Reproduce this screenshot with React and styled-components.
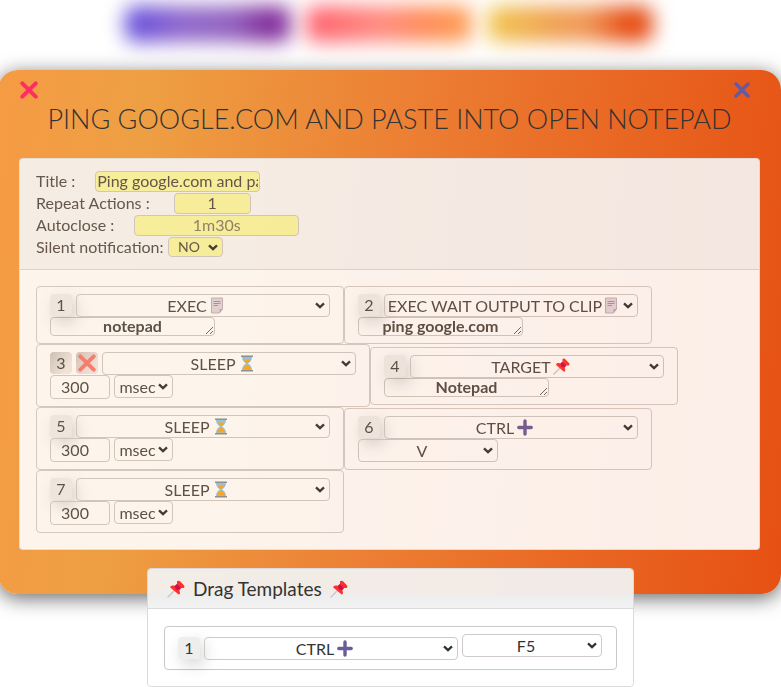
import React from "react";
import styled, { createGlobalStyle, css } from "styled-components";

const chevron = `url("data:image/svg+xml,%3Csvg xmlns='http://www.w3.org/2000/svg' width='10' height='7' viewBox='0 0 10 7'%3E%3Cpath d='M1 1.4L5 5.2L9 1.4' fill='none' stroke='%23333' stroke-width='2.3'/%3E%3C/svg%3E")`;

const GlobalStyle = createGlobalStyle`
  *, *::before, *::after { box-sizing: border-box; }
  body {
    margin: 0;
    overflow-x: hidden;
    background: #fff;
    color: #333;
    font: 16px/22px Lato, "Open Sans", sans-serif;
  }
  button, input, select, textarea { font: inherit; color: inherit; margin: 0; }
`;

const TopBar = styled.nav`
  display: flex;
  justify-content: center;
  gap: 15px;
  height: 70px;
  padding: 6px 4px 28px 0;
`;

const GradientButton = styled.button`
  width: 166px;
  border: 0;
  border-radius: 10px;
  background: linear-gradient(90deg, ${(p) => p.$colors});
  filter: blur(10px);
`;

const Editor = styled.main`
  margin: 0 0 0 -2px;
  padding: 10px 21px 44px;
  border-radius: 20px;
  background: linear-gradient(96deg, #f59b45 0%, #ee9f43 18%, #ec8034 49%, #e96824 74%, #e65113 100%);
  box-shadow: 0 4px 20px rgba(0, 0, 0, 0.6);
`;

const EditorActions = styled.div`
  display: flex;
  justify-content: space-between;
  padding: 0 8px 0 0;
`;

const IconButton = styled.button`
  display: grid;
  place-items: center;
  width: 20px;
  height: 20px;
  padding: 0;
  border: 0;
  background: none;
  color: ${(p) => p.$color};
`;

const EditorTitle = styled.h1`
  margin: 0 0 20px;
  font-size: 27px;
  font-weight: 300;
  line-height: 38px;
  text-align: center;
  text-transform: uppercase;
  white-space: nowrap;
`;

const Panel = styled.section`
  border: 1px solid rgba(0, 0, 0, 0.1);
  border-radius: 4px;
  background: #fff;
  opacity: ${(p) => p.$opacity || 1};
`;

const SettingsForm = styled.form`
  padding: 11px 16px;
  border-bottom: 1px solid rgba(0, 0, 0, 0.11);
  background: rgba(0, 0, 0, 0.035);
  color: #57504b;
`;

const Field = styled.div`
  display: flex;
  align-items: center;
  height: 22px;
  gap: ${(p) => p.$gap};
`;

const control = css`
  border: 1px solid #cfcac7;
  border-radius: 4px;
  background-color: transparent;
  text-align: center;
`;

const SettingInput = styled.input`
  ${control}
  width: ${(p) => p.$width};
  height: 21px;
  padding: 0 1px;
  background-color: #f8f6a4;
  &::placeholder { color: #85816a; }
`;

const Select = styled.select`
  ${control}
  appearance: none;
  width: ${(p) => p.$width || "254px"};
  height: 23px;
  padding: 0 ${(p) => p.$reserve || "12px"} 0 0;
  background-image: ${chevron};
  background-repeat: no-repeat;
  background-position: right 4px center;
  text-align-last: center;
`;

const SettingSelect = styled(Select)`
  height: 20px;
  line-height: 18px;
  font-size: 14px;
  background-color: #f8f6a4;
`;

const StepList = styled.ol`
  display: flex;
  flex-wrap: wrap;
  align-items: center;
  margin: 0;
  padding: 16px;
  list-style: none;
  color: #504a46;
`;

const Step = styled.li`
  padding: 7px 13px;
  border: 1px solid #d3cdca;
  border-radius: 4px;
`;

const StepRow = styled.div`
  display: flex;
  gap: 4px;
`;

const Badge = styled.span`
  display: grid;
  place-items: center;
  width: 22px;
  height: 22px;
  border-radius: 4px;
  background: ${(p) => (p.$active ? "linear-gradient(125deg, #c9c4c1, #efebe8 75%)" : "#eeeeed")};
  box-shadow: ${(p) => (p.$active ? "none" : "4px 6px 16px rgba(0, 0, 0, 0.17)")};
`;

const RemoveButton = styled(IconButton)`
  width: 22px;
  height: 22px;
  border-radius: 4px;
  background: linear-gradient(125deg, #d0c5c2, #f1e6e4 75%);
`;

const SelectBox = styled.div`
  position: relative;
  height: 23px;
`;

const SelectIcon = styled.span`
  position: absolute;
  top: 3px;
  left: ${(p) => p.$left};
  display: flex;
  pointer-events: none;
`;

const StepText = styled.textarea`
  ${control}
  display: block;
  width: 165px;
  height: 19px;
  padding: 0;
  font-weight: 700;
  line-height: 16px;
  overflow: hidden;
`;

const Delay = styled.input`
  ${control}
  width: 60px;
  height: 24px;
  padding: 0 10px 2px 0;
`;

const Templates = styled.section`
  position: relative;
  width: fit-content;
  margin: -26px auto 0;
  border: 1px solid #dadada;
  border-radius: 4px;
`;

const TemplatesTitle = styled.h2`
  display: flex;
  align-items: center;
  gap: 8px;
  margin: 0;
  padding: 0 19px;
  border-bottom: 1px solid #dcdcdc;
  border-radius: 3px 3px 0 0;
  background: rgba(242, 242, 242, 0.94);
  font-size: 19px;
  font-weight: 400;
  line-height: 39px;
`;

const TemplatesBody = styled.div`
  padding: 17px 16px 16px;
  background: #fff;
  border-radius: 0 0 4px 4px;
`;

const Template = styled.div`
  display: flex;
  align-items: center;
  gap: 4px;
  height: 44px;
  padding: 0 14px 0 13px;
  border: 1px solid #c9c9c9;
  border-radius: 4px;
`;

const RaisedSlot = styled.div`
  display: flex;
  padding-bottom: 6px;
`;

const Cross = ({ size = 18, width = 3 }) => (
  <svg width={size} height={size} viewBox="0 0 18 18" aria-hidden="true">
    <path d="M2.3 2.3L15.7 15.7M15.7 2.3L2.3 15.7" stroke="currentColor" strokeWidth={width} strokeLinecap="round" />
  </svg>
);

const PageIcon = () => (
  <svg width="14" height="17" viewBox="0 0 14 17">
    <path d="M1.500 1H12.500V12L9.500 16H1.500Z" fill="#e2d6e0" stroke="#bdb1bc" />
    <path d="M9.500 16V12H12.500Z" fill="#b9a8bb" />
    <path d="M3.500 4.500H10.500M3.500 6.500H10.500M3.500 8.500H8" stroke="#a092a5" />
  </svg>
);

const HourglassIcon = () => (
  <svg width="14" height="17" viewBox="0 0 14 17">
    <path d="M2 2H12C12 5 10.500 7 8 8.500C10.500 10 12 12 12 15H2C2 12 3.500 10 6 8.500C3.500 7 2 5 2 2Z" fill="#8fc7e8" />
    <path d="M4 4.500H10C9.500 6.500 8.500 7.300 7 8.300C5.500 7.300 4.500 6.500 4 4.500ZM7 9.500C9 11 11 12 11 14.500H3C3 12 5 11 7 9.500Z" fill="#fba91e" />
    <path d="M1 1.300H13M1 15.700H13" stroke="#83919b" strokeWidth="1.600" />
  </svg>
);

const PinIcon = ({ size = 17 }) => (
  <svg width={size} height={size} viewBox="0 0 18 18" aria-hidden="true">
    <path d="M7 11L1 17" stroke="#c4c8ca" strokeWidth="1.400" strokeLinecap="round" />
    <path d="M10 1.300C11 .200 12.300 .600 13.300 1.600L16.600 4.900C17.800 6.200 17.800 7.200 16.500 7.900L14 8L12.400 10.500C13.600 13 12.800 14.600 11.600 14.500L3.300 7.400C3.300 5.600 5.200 5 7.500 5.700L10 4Z" fill="#fb3131" />
    <path d="M9.800 4.200L13.800 8C12.800 10.200 10.300 10.200 8.900 8.900C7.500 7.500 8 5.300 9.800 4.200Z" fill="#cf0d4b" />
  </svg>
);

const PlusIcon = () => (
  <svg width="16" height="17" viewBox="0 0 16 17">
    <path d="M8 2V15M1.800 8.500H14.200" stroke="#6b5b98" strokeWidth="3.400" strokeLinecap="round" />
  </svg>
);

const ACTIONS = {
  "EXEC": { icon: PageIcon, left: "134px" },
  "EXEC WAIT OUTPUT TO CLIP": { icon: PageIcon, left: "220px" },
  "SLEEP": { icon: HourglassIcon, left: "138px" },
  "TARGET": { icon: PinIcon, left: "143px" },
  "CTRL": { icon: PlusIcon, left: "133px" },
};

const STEPS = [
  { action: "EXEC", text: "notepad" },
  { action: "EXEC WAIT OUTPUT TO CLIP", text: "ping google.com" },
  { action: "SLEEP", delay: "300", active: true },
  { action: "TARGET", text: "Notepad" },
  { action: "SLEEP", delay: "300" },
  { action: "CTRL", keyName: "V" },
  { action: "SLEEP", delay: "300" },
];

function ActionSelect({ value }) {
  const { icon: Icon, left } = ACTIONS[value];
  return (
    <SelectBox>
      <Select aria-label="Action" defaultValue={value} $reserve="32px">
        {Object.keys(ACTIONS).map((name) => <option key={name}>{name}</option>)}
      </Select>
      <SelectIcon $left={left} aria-hidden="true"><Icon /></SelectIcon>
    </SelectBox>
  );
}

function KeySelect({ value }) {
  return (
    <Select aria-label="Key" defaultValue={value} $width="140px">
      <option>V</option>
      <option>F5</option>
    </Select>
  );
}

function StepCard({ number, action, text, delay, keyName, active }) {
  return (
    <Step>
      <StepRow>
        <Badge $active={active}>{number}</Badge>
        {active && (
          <RemoveButton type="button" aria-label="Remove step" $color="#f67c74">
            <Cross width={4} />
          </RemoveButton>
        )}
        <ActionSelect value={action} />
      </StepRow>
      {text && <StepText aria-label="Value" rows={1} defaultValue={text} spellCheck={false} />}
      {delay && (
        <StepRow>
          <Delay aria-label="Delay" defaultValue={delay} />
          <Select aria-label="Unit" defaultValue="msec" $width="59px">
            <option>msec</option>
            <option>sec</option>
          </Select>
        </StepRow>
      )}
      {keyName && <StepRow><KeySelect value={keyName} /></StepRow>}
    </Step>
  );
}

export default function App() {
  return (
    <>
      <GlobalStyle />
      <TopBar>
        <GradientButton aria-label="New" $colors="#5f48dc, #9068cc 35%, #9060bd 65%, #812d9c 85%" />
        <GradientButton aria-label="Load" $colors="#ff5c6a, #ff8b80 45%, #ff8b5a 70%, #ff9c4d" />
        <GradientButton aria-label="Save" $colors="#f2c84f, #f0a050 40%, #f09858 60%, #e64a10 85%" />
      </TopBar>
      <Editor>
        <EditorActions>
          <IconButton aria-label="Delete" $color="#ff2d62"><Cross width={4} /></IconButton>
          <IconButton aria-label="Close" $color="#6759a0"><Cross size={16} width={4} /></IconButton>
        </EditorActions>
        <EditorTitle>Ping google.com and paste into open notepad</EditorTitle>
        <Panel $opacity={0.9}>
          <SettingsForm>
            <Field $gap="20px">
              <label htmlFor="title">Title :</label>
              <SettingInput id="title" $width="165px" defaultValue="Ping google.com and paste into open notepad" />
            </Field>
            <Field $gap="24px">
              <label htmlFor="repeat">Repeat Actions :</label>
              <SettingInput id="repeat" $width="77px" defaultValue="1" />
            </Field>
            <Field $gap="20px">
              <label htmlFor="autoclose">Autoclose :</label>
              <SettingInput id="autoclose" $width="165px" placeholder="1m30s" />
            </Field>
            <Field $gap="4px">
              <label htmlFor="silent">Silent notification:</label>
              <SettingSelect id="silent" $width="55px" defaultValue="NO">
                <option>NO</option>
                <option>YES</option>
              </SettingSelect>
            </Field>
          </SettingsForm>
          <StepList>
            {STEPS.map((step, i) => <StepCard key={i} number={i + 1} {...step} />)}
          </StepList>
        </Panel>
      </Editor>
      <Templates>
        <TemplatesTitle>
          <PinIcon size={18} />
          Drag Templates
          <PinIcon size={18} />
        </TemplatesTitle>
        <TemplatesBody>
          <Template>
            <Badge>1</Badge>
            <ActionSelect value="CTRL" />
            <RaisedSlot><KeySelect value="F5" /></RaisedSlot>
          </Template>
        </TemplatesBody>
      </Templates>
    </>
  );
}
